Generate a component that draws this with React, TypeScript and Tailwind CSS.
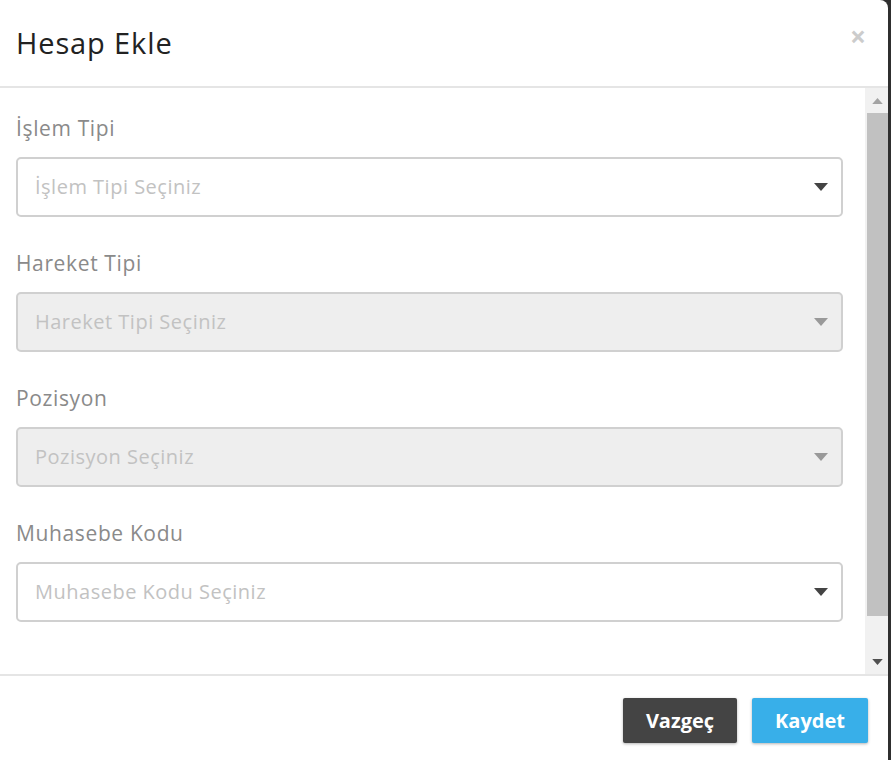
const fields = [
  { label: "İşlem Tipi", placeholder: "İşlem Tipi Seçiniz", disabled: false },
  { label: "Hareket Tipi", placeholder: "Hareket Tipi Seçiniz", disabled: true },
  { label: "Pozisyon", placeholder: "Pozisyon Seçiniz", disabled: true },
  { label: "Muhasebe Kodu", placeholder: "Muhasebe Kodu Seçiniz", disabled: false },
];

function Caret({ up, className }: { up?: boolean; className?: string }) {
  return (
    <svg width="14" height="8" viewBox="0 0 14 8" className={className}>
      {up ? <path d="M0 8 L7 0 L14 8 Z" fill="currentColor" /> : <path d="M0 0 L14 0 L7 8 Z" fill="currentColor" />}
    </svg>
  );
}

function SelectBox({ placeholder, disabled }: { placeholder: string; disabled: boolean }) {
  return (
    <div
      className={
        disabled
          ? "h-[60px] flex items-center justify-between rounded-[5px] border-2 border-[#d0d0d0] bg-[#eeeeee] pl-[17px] pr-[13px]"
          : "h-[60px] flex items-center justify-between rounded-[5px] border-2 border-[#d0d0d0] bg-white pl-[17px] pr-[13px]"
      }
    >
      <span className="text-[20px] tracking-[0.025em] text-[#c2c2c2]">{placeholder}</span>
      <Caret className={disabled ? "text-[#999999]" : "text-[#444444]"} />
    </div>
  );
}

export default function App() {
  return (
    <div className="w-[891px] h-[760px] bg-[#2f2f2f] flex" style={{ fontFamily: '"Open Sans", "Noto Sans", sans-serif' }}>
      <div className="w-[888px] h-full bg-white rounded-tr-[8px] flex flex-col overflow-hidden">
        {/* başlık */}
        <div className="h-[88px] flex items-center justify-between pl-[16px] pr-[22px] border-b-2 border-[#e5e5e5] shrink-0">
          <h1 className="text-[29px] tracking-[0.03em] text-[#222222] leading-none pb-[2px]">Hesap Ekle</h1>
          <span className="text-[28px] font-bold text-[#cccccc] leading-none mb-[14px]">×</span>
        </div>

        {/* içerik */}
        <div className="flex flex-1 min-h-0">
          <div className="flex-1 pt-[27px] pl-[16px] pr-[22px]">
            {fields.map((f) => (
              <div key={f.label} className="mb-[33px]">
                <div className="text-[21px] tracking-[0.03em] leading-[27px] text-[#8a8a8a] mb-[15px]">{f.label}</div>
                <SelectBox placeholder={f.placeholder} disabled={f.disabled} />
              </div>
            ))}
          </div>
          {/* kaydırma çubuğu */}
          <div className="w-[23px] bg-[#f1f1f1] flex flex-col items-end">
            <div className="w-[21px] h-[25px] flex items-center justify-center text-[#a3a3a3]">
              <Caret up className="w-[11px] h-[6px]" />
            </div>
            <div className="w-[21px] flex-1 bg-[#c1c1c1] mb-[33px]" />
            <div className="w-[21px] h-[25px] flex items-center justify-center text-[#505050]">
              <Caret className="w-[11px] h-[6px]" />
            </div>
          </div>
        </div>

        {/* alt kısım */}
        <div className="h-[86px] shrink-0 border-t-2 border-[#e5e5e5] flex justify-end items-start gap-[15px] pt-[22px] pr-[20px]">
          <button className="w-[114px] h-[45px] rounded-[2px] bg-[#444444] text-white text-[20px] font-bold shadow-[0_1px_3px_rgba(0,0,0,0.3)]">
            Vazgeç
          </button>
          <button className="w-[116px] h-[45px] rounded-[2px] bg-[#38afe9] text-white text-[20px] font-bold shadow-[0_1px_3px_rgba(0,0,0,0.3)]">
            Kaydet
          </button>
        </div>
      </div>
    </div>
  );
}
